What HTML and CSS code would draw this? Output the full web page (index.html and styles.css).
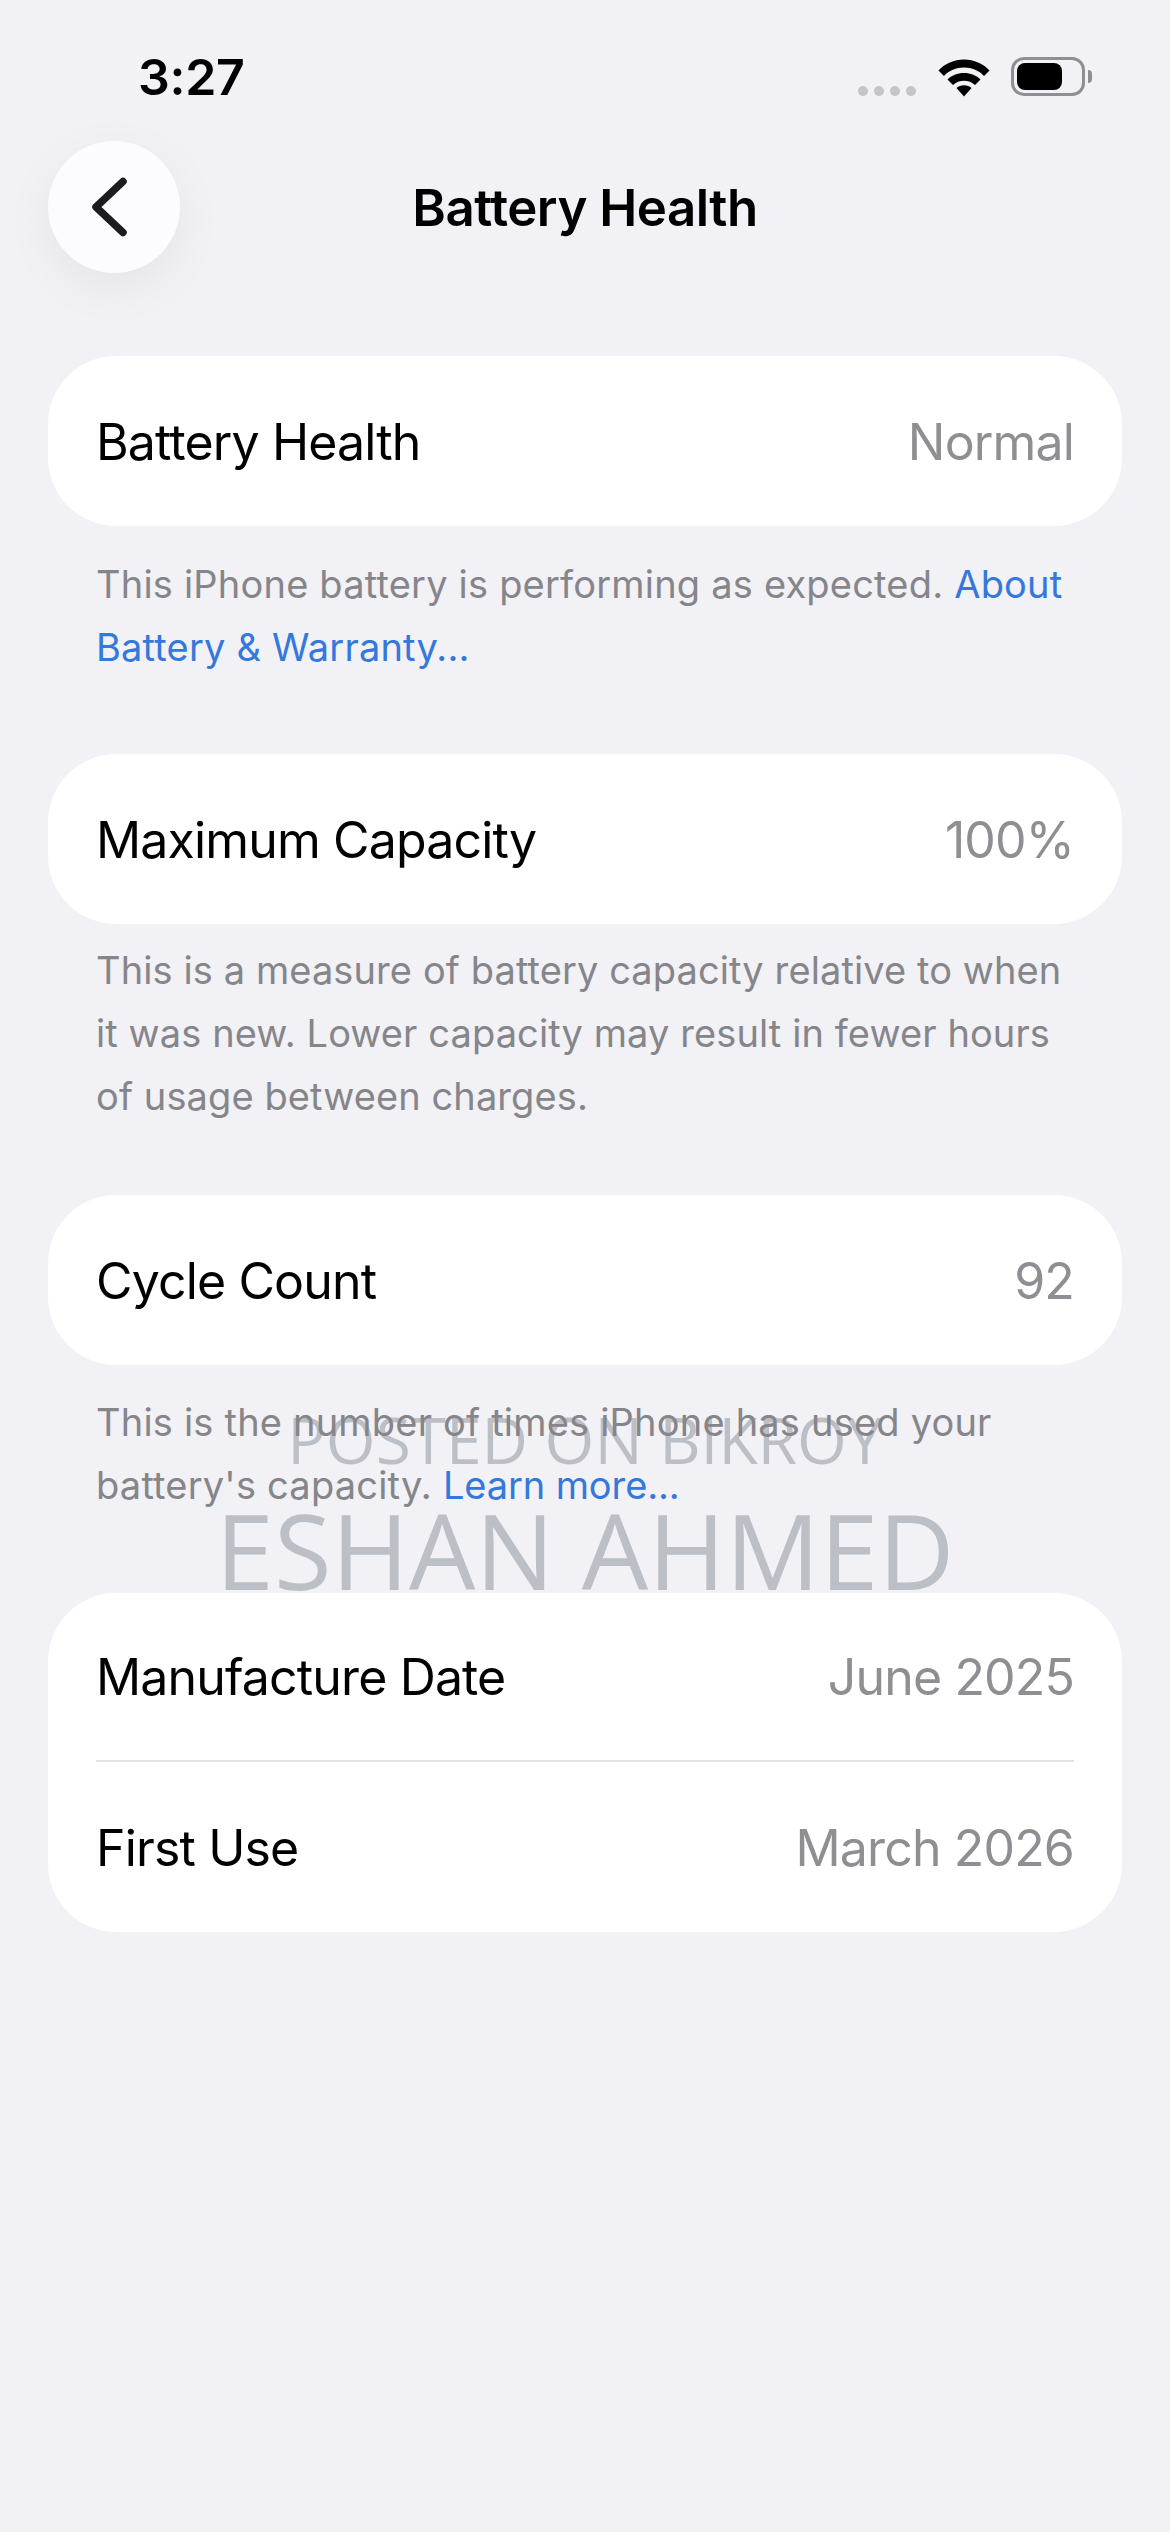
FILE: index.html
```html
<!DOCTYPE html>
<html lang="en">
<head>
<meta charset="utf-8">
<title>Battery Health</title>
<link rel="stylesheet" href="styles.css">
</head>
<body>
<div class="page">
  <header class="status">
    <span class="time">3:27</span>
    <div class="status-icons">
      <div class="dots"><i></i><i></i><i></i><i></i></div>
      <svg class="wifi" width="52" height="40" viewBox="0 0 52 40"><path d="M0.5 12.5C7 5.5 16 1.5 26 1.5s19 4 25.500 11L46 18C41 12.500 34 9.500 26 9.500S11 12.500 6 18Z"/><path d="M9.500 21.500C13.500 17.500 19.500 15 26 15s12.500 2.500 16.500 6.500L37 27C34 24.200 30.300 22.700 26 22.700S18 24.200 15 27Z"/><path d="M18.500 30C20.500 28.300 23 27.300 26 27.300S31.500 28.300 33.500 30L26 38.500Z"/></svg>
      <div class="battery"><div class="battery-body"><div class="battery-fill"></div></div><div class="battery-nub"></div></div>
    </div>
  </header>
  <nav class="nav">
    <button class="back" type="button" aria-label="Back">
      <svg width="40" height="60" viewBox="0 0 40 60"><path d="M33 4.500 6 30l27 25.500" fill="none" stroke="#1c1c1e" stroke-width="7.500" stroke-linecap="round" stroke-linejoin="round"/></svg>
    </button>
    <h1 class="title">Battery Health</h1>
  </nav>
  <main class="content">
    <section class="card"><div class="row"><span class="label">Battery Health</span><span class="value">Normal</span></div></section>
    <p class="note note-first">This iPhone battery is performing as expected. <a class="link">About Battery &amp; Warranty...</a></p>
    <section class="card"><div class="row"><span class="label">Maximum Capacity</span><span class="value">100%</span></div></section>
    <p class="note note-second">This is a measure of battery capacity relative to when it was new. Lower capacity may result in fewer hours of usage between charges.</p>
    <section class="card"><div class="row"><span class="label">Cycle Count</span><span class="value">92</span></div></section>
    <div class="note-wrap">
      <div class="watermark"><span class="wm-top">POSTED ON BIKROY</span><span class="wm-name">ESHAN AHMED</span></div>
      <p class="note note-third">This is the number of times iPhone has used your battery's capacity. <a class="link">Learn more...</a></p>
    </div>
    <section class="card card-last">
      <div class="row row-top"><span class="label">Manufacture Date</span><span class="value">June 2025</span></div>
      <div class="divider"></div>
      <div class="row"><span class="label">First Use</span><span class="value">March 2026</span></div>
    </section>
  </main>
</div>
</body>
</html>
```
FILE: styles.css
```css
* { box-sizing: border-box; }
html, body { margin: 0; padding: 0; }
body { background: #f1f1f6; font-family: Inter, "Liberation Sans", sans-serif; color: #000; }
.page { width: 1170px; height: 2532px; overflow: hidden; background: #f1f1f6; }

.status { height: 141px; display: flex; justify-content: space-between; padding: 0 78px 0 138px; }
.time { font-size: 50px; font-weight: 600; line-height: 60px; margin-top: 47px; letter-spacing: -0.3px; }
.status-icons { display: flex; align-items: flex-start; padding-top: 57px; }
.dots { display: flex; gap: 6px; margin: 29px 22px 0 0; }
.dots i { width: 10px; height: 10px; border-radius: 50%; background: #c4c4c9; }
.wifi { fill: #000; margin-right: 21px; margin-top: 1px; }
.battery { display: flex; align-items: center; }
.battery-body { width: 74px; height: 39px; border: 3px solid #8e8e93; border-radius: 13px; padding: 3px; }
.battery-fill { width: 45px; height: 100%; background: #000; border-radius: 8px; }
.battery-nub { width: 4px; height: 13px; background: #8e8e93; border-radius: 0 7px 7px 0; margin-left: 3px; }

.nav { display: grid; grid-template-columns: 132px 1fr 132px; align-items: center; padding: 0 48px; height: 132px; }
.back { width: 132px; height: 132px; border: 0; border-radius: 50%; background: #fcfcfe; box-shadow: 0 14px 50px rgba(0, 0, 0, .06); padding: 0 8px 0 0; display: flex; align-items: center; justify-content: center; }
.title { margin: 0; font-size: 51px; font-weight: 600; text-align: center; letter-spacing: -0.5px; }

.content { padding: 83px 48px 0; }
.card { position: relative; z-index: 1; background: #fff; border-radius: 68px; padding: 0 48px; }
.row { height: 170px; padding-top: 1px; display: flex; justify-content: space-between; align-items: center; font-size: 50px; letter-spacing: -0.85px; }
.label { color: #000; }
.value { color: #8e8e93; }
.card-last .row { height: 169px; }
.card-last .row-top { height: 167px; }
.divider { height: 2px; margin-bottom: 1px; background: #e2e2e5; }

.note { position: relative; margin: 0; padding: 0 48px; font-size: 38px; line-height: 63px; letter-spacing: 0.2px; color: #85858a; }
.link { color: #3478dc; }
.note-first { margin-top: 27px; margin-bottom: 75px; }
.note-second { margin-top: 15px; margin-bottom: 67px; letter-spacing: 0.1px; }
.note-third .link { letter-spacing: -0.1px; }
.note-wrap { position: relative; padding-top: 26px; height: 228px; }

.watermark { position: absolute; left: 0; right: 0; top: 35px; display: flex; flex-direction: column; align-items: center; font-family: "Open Sans", sans-serif; color: #bcc0c6; }
.wm-top { font-size: 64px; line-height: 80px; }
.wm-name { font-size: 105px; line-height: 140px; }
```
